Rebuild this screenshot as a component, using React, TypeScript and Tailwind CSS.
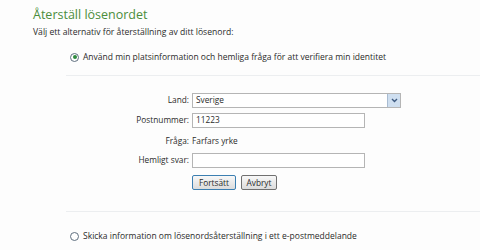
export default function App() {
	return (
		<div
			className="w-[480px] h-[250px] bg-[#fdfdfd] text-[#2b2b2b] overflow-hidden"
			style={{ fontFamily: '"Open Sans", "Noto Sans", sans-serif' }}
		>
			<div className="pl-[33px] pt-[6px]">
				<h1 className="text-[12.5px] leading-[17px] text-[#4b8d3c]">Återställ lösenordet</h1>
				<p className="mt-[3px] text-[8.6px] leading-[12px]">
					Välj ett alternativ för återställning av ditt lösenord:
				</p>
			</div>
			<div className="ml-[66px] mt-[13px]">
				<label className="flex items-center gap-[4px] pl-[4px] text-[8.5px] leading-[12px]">
					<span className="w-[9px] h-[9px] rounded-full border border-[#5f6f7f] bg-white flex items-center justify-center">
						<span className="w-[4px] h-[4px] rounded-full bg-[#2e8b3e]" />
					</span>
					Använd min platsinformation och hemliga fråga för att verifiera min identitet
				</label>
				<div className="mt-[12px] border-t border-[#eceef0]" />
			</div>
			<div className="grid grid-cols-[189px_auto] gap-x-[3px] gap-y-[5px] mt-[17px] text-[8.3px] items-center">
				<span className="text-right">Land:</span>
				<div className="w-[209px] h-[15px] border border-[#b5b5b5] bg-white flex items-center justify-between">
					<span className="pl-[3px]">Sverige</span>
					<span className="w-[13px] h-[13px] bg-[#cfdff0] border-l border-[#a9bcd2] flex items-center justify-center">
						<svg width="7" height="5" viewBox="0 0 7 5">
							<path d="M1 1 L3.5 3.5 L6 1" fill="none" stroke="#3d5a80" strokeWidth="1.4" />
						</svg>
					</span>
				</div>
				<span className="text-right">Postnummer:</span>
				<div className="w-[173px] h-[15px] border border-[#b5b5b5] bg-white flex items-center pl-[3px]">
					11223
				</div>
				<span className="text-right h-[15px] leading-[15px]">Fråga:</span>
				<span className="h-[15px] leading-[15px]">Farfars yrke</span>
				<span className="text-right">Hemligt svar:</span>
				<div className="w-[173px] h-[15px] border border-[#b5b5b5] bg-white" />
				<span />
				<div className="flex gap-[5px] mt-[2px]">
					<button className="w-[44px] h-[15px] border border-[#3c7fb1] rounded-[2px] bg-gradient-to-b from-[#f8f8f8] to-[#dcdcdc] leading-[13px]">
						Fortsätt
					</button>
					<button className="w-[36px] h-[15px] border border-[#707070] rounded-[2px] bg-gradient-to-b from-[#f8f8f8] to-[#dcdcdc] leading-[13px]">
						Avbryt
					</button>
				</div>
			</div>
			<div className="ml-[66px] mt-[21px] border-t border-[#eceef0]" />
			<label className="ml-[70px] mt-[18px] flex items-center gap-[4px] text-[8.5px] leading-[12px]">
				<span className="w-[9px] h-[9px] rounded-full border border-[#5f6f7f] bg-white" />
				Skicka information om lösenordsåterställning i ett e-postmeddelande
			</label>
		</div>
	);
}
